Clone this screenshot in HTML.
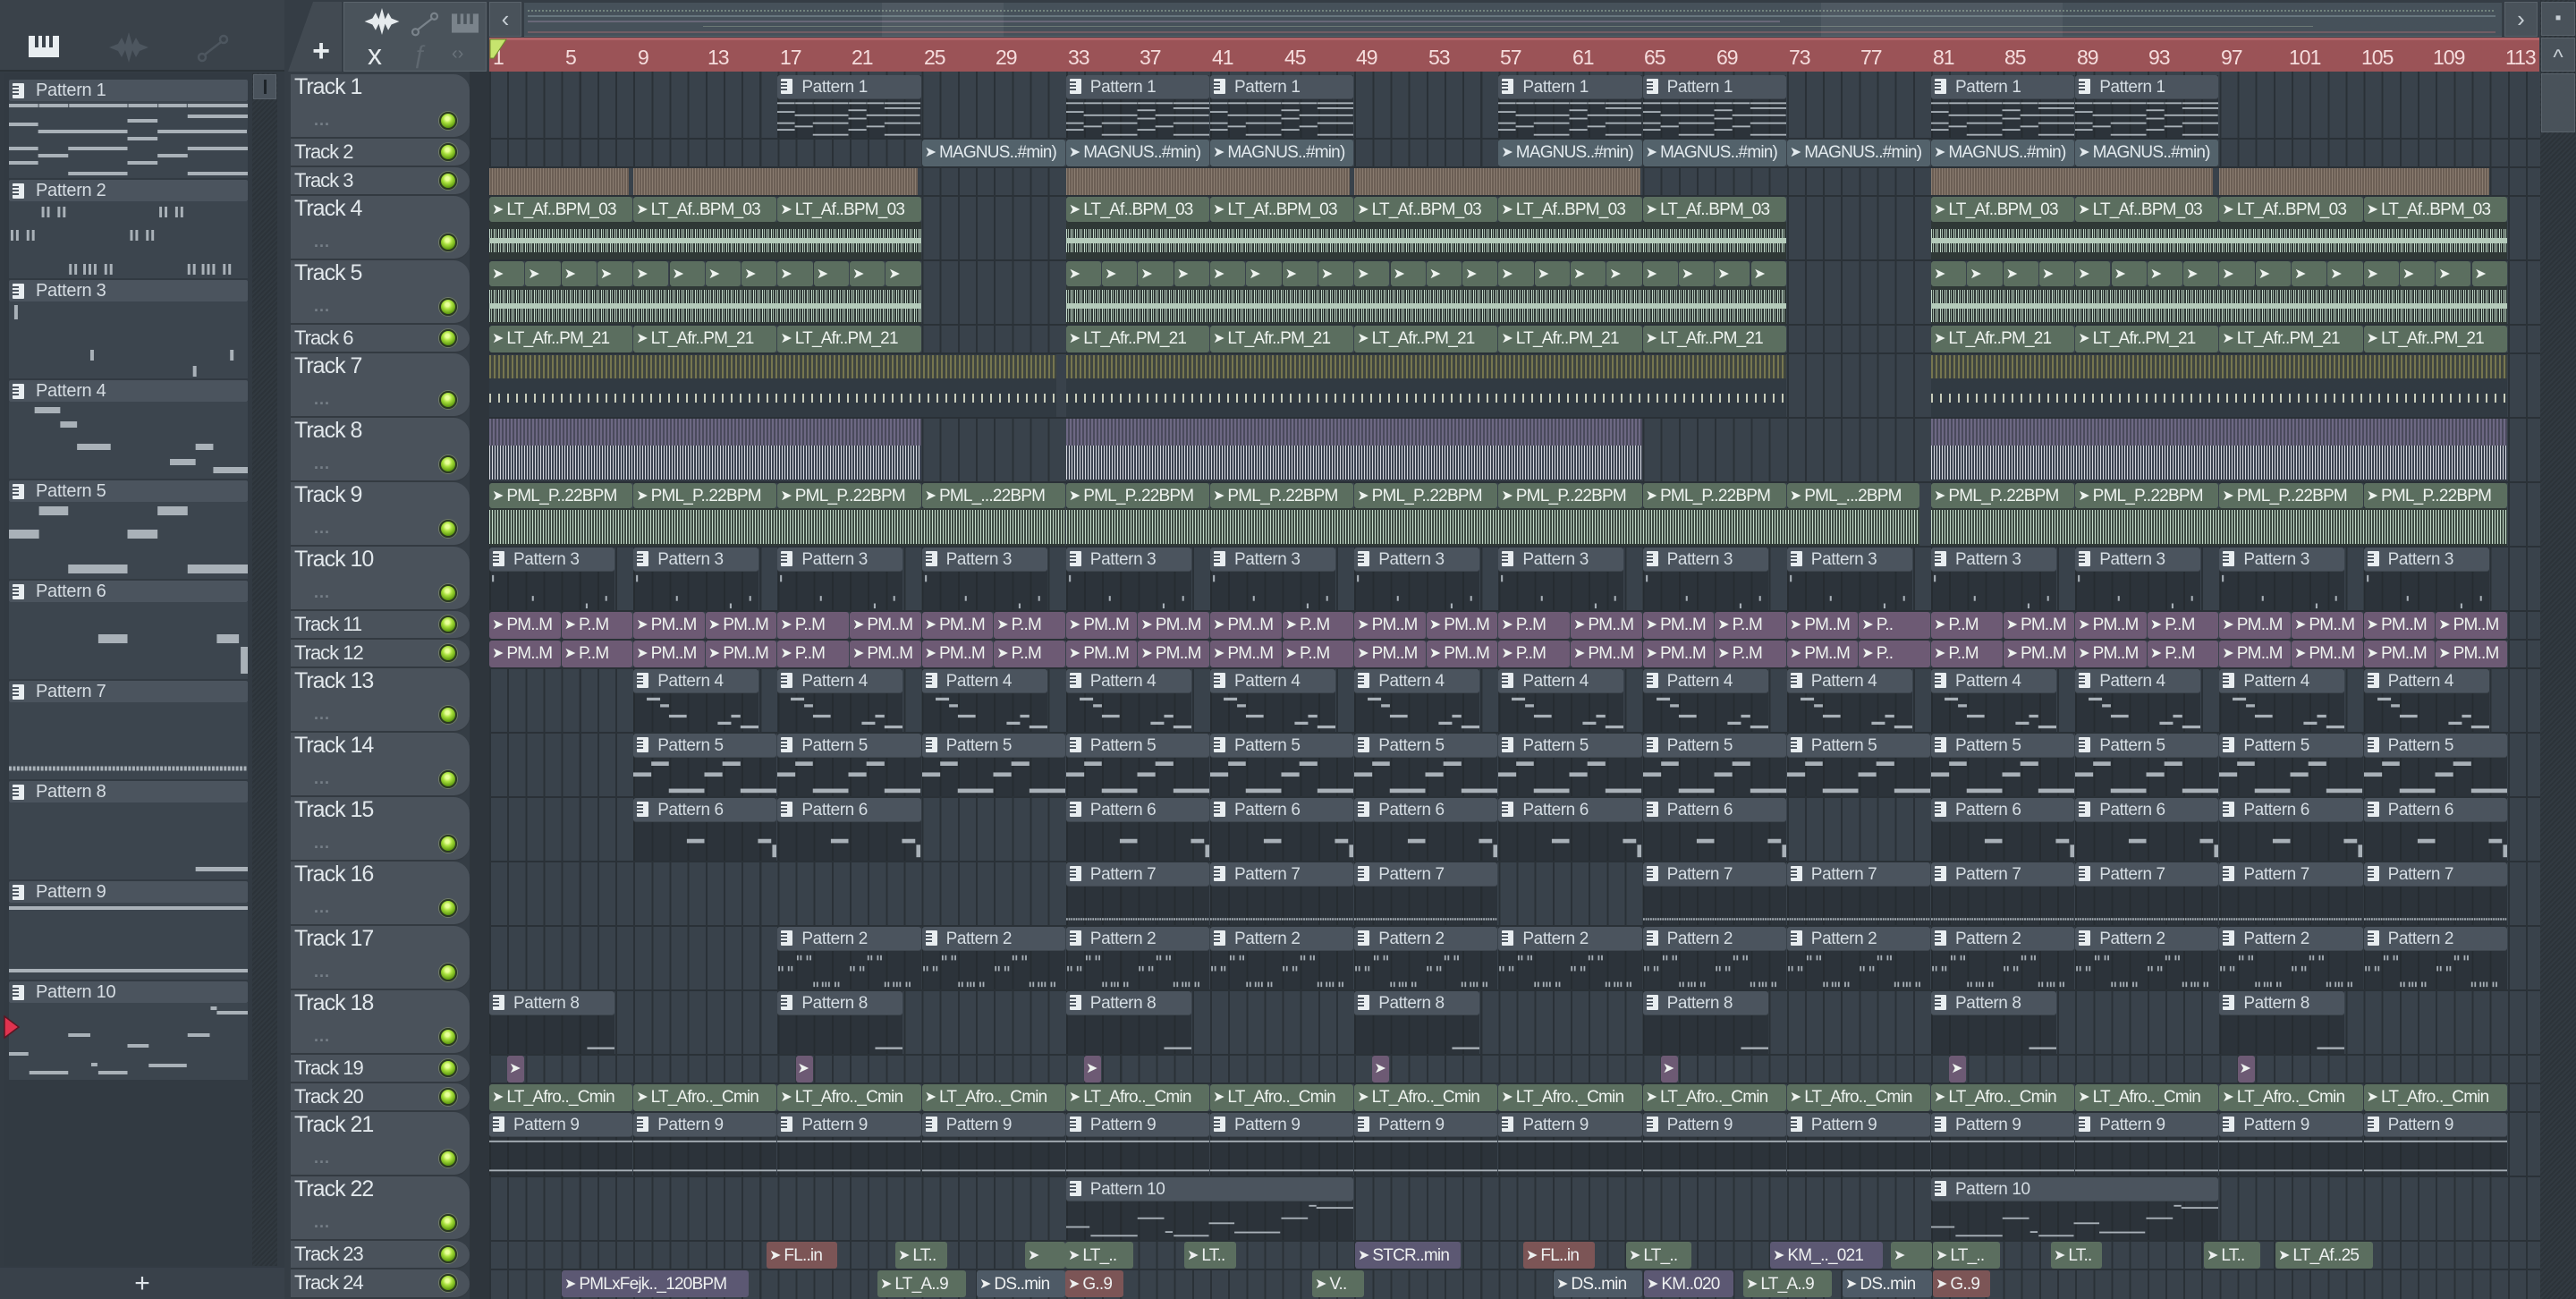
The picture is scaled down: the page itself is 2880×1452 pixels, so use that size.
<!DOCTYPE html>
<html><head><meta charset="utf-8">
<style>
*{margin:0;padding:0;box-sizing:border-box}
body{width:2880px;height:1452px;overflow:hidden;background:#353d45;font-family:"Liberation Sans Narrow","Liberation Sans",sans-serif;position:relative}
.a{position:absolute}
#lp{left:0;top:0;width:318px;height:1452px;background:#333b43}
#lpt{left:0;top:0;width:318px;height:80px;background:#3a424a;border-bottom:2px solid #2b3238}
#lpc{left:4px;top:82px;width:306px;height:1333px;background:#323a42}
.ph{position:absolute;left:10px;width:267px;height:24px;background:#4b545e;border-radius:2px;color:#d6dde3;font-size:20px;letter-spacing:-.3px;line-height:24px;padding-left:30px;white-space:nowrap}
.pv{position:absolute;left:10px;width:267px;height:86px;background:#3c454e}
.pv svg{width:100%;height:100%;display:block}
.pic{position:absolute;left:4px;top:4px;width:13px;height:17px;background:#e8edf0;border-radius:1px}
.pic:before{content:"";position:absolute;left:0;top:3px;width:7px;height:2px;background:#4b545e;box-shadow:0 4px 0 #4b545e,0 8px 0 #4b545e}
#sb{left:282px;top:82px;width:28px;height:1333px;background:repeating-linear-gradient(135deg,#2c3339 0 2px,#313940 2px 4px)}
#sbt{left:283px;top:83px;width:26px;height:28px;background:#4a535c;border:1px solid #5a636c}
#sbt:after{content:"";position:absolute;left:11px;top:5px;width:3px;height:16px;background:#1e2429}
#lpb{left:0;top:1417px;width:318px;height:35px;background:#39414a;color:#dfe5ea;font-size:30px;line-height:35px;text-align:center}
#tab{left:322px;top:2px;width:60px;height:78px;background:#424a52;clip-path:polygon(28px 0,100% 0,100% 100%,0 100%);color:#e9eef1;font-size:34px;font-weight:bold;text-align:center;line-height:110px;padding-left:14px}
#tools{left:384px;top:2px;width:160px;height:78px;background:#4a535b;border:1px solid #5a636b}
#lb{left:547px;top:2px;width:36px;height:39px;background:#49525a;border:1px solid #59626a;color:#c8d0d6;font-size:26px;text-align:center;line-height:36px}
#rb{left:2800px;top:2px;width:37px;height:39px;background:#49525a;border:1px solid #59626a;color:#c8d0d6;font-size:26px;text-align:center;line-height:36px}
#ov{left:586px;top:3px;width:2211px;height:38px;background:#46515a;border-bottom:1px solid #59636b}
#ruler{left:547px;top:42px;width:2292px;height:38px;background:#9b5357;border-top:3px solid #b26468}
.rn{position:absolute;top:6px;color:#f5dcdc;font-size:23px;letter-spacing:-1px;line-height:26px}
#vs{left:2840px;top:0;width:40px;height:1452px;background:repeating-linear-gradient(135deg,#2c3339 0 2px,#323a41 2px 4px)}
.vb{position:absolute;left:1px;width:38px;background:#49525a;border:1px solid #59626a;color:#c8d0d6;text-align:center}
#grid{left:547px;top:80px;width:2293px;height:1372px;background:#39424b;background-image:repeating-linear-gradient(90deg,#2a3137 0 2px,transparent 2px 20.15px)}
#strip{left:525px;top:80px;width:22px;height:1372px;background:#2e353c}
.th{position:absolute;left:325px;width:200px;background:#4a525b;border-radius:0 18px 18px 0;border-bottom:2px solid #333a41;color:#e1e7eb;font-size:25px;letter-spacing:-1px;padding-left:4px;white-space:nowrap}
.th .d{position:absolute;left:26px;bottom:8px;color:#767f87;font-size:18px;letter-spacing:1px;font-weight:bold}
.led{position:absolute;right:14px;width:20px;height:20px;border-radius:50%;background:radial-gradient(circle at 45% 35%,#e8ff9a 0 2px,#a8e03c 5px,#5f9a10 10px);border:2px solid #2b3a22;box-shadow:0 0 0 1px #6f7a68}
.sep{position:absolute;left:547px;width:2293px;height:2px;background:#2a3137}
.r{position:absolute;left:547px;width:2293px}
.c{position:absolute;top:1px;bottom:1px;left:calc((var(--b) - 1) * 20.15px);width:calc(var(--n,8) * 20.15px - 1px);overflow:hidden;white-space:nowrap}
.pc{background:rgba(34,40,46,.55)}
.pc .h{height:27px;background:#4b545e;border-radius:3px;color:#d5dde3;font-size:19px;letter-spacing:-.4px;line-height:27px;padding-left:27px;position:relative;border-bottom:1px solid #3f474f}
.pc svg{position:absolute;left:0;top:29px;width:100%;height:calc(100% - 30px)}
.hd{height:28px;border-radius:3px;color:#eef3ef;font-size:19px;letter-spacing:-.8px;line-height:28px;padding-left:3px;overflow:hidden;white-space:nowrap}
.g{background:#5b6e5f}
.m{background:#53626b;color:#e3eaee}
.p{background:#6d5a74}
.rd{background:#7c5556}
.pp{background:#5c5873}
.gy{background:#4e5a66}
.ar{font-family:"DejaVu Sans",sans-serif;font-size:16px;margin-right:3px;vertical-align:1px;letter-spacing:0}
.wv{position:absolute;background:repeating-linear-gradient(90deg,#c4dacb 0 1px,transparent 1px 2px,#9fb5a6 2px 3px,transparent 3px 5px)}
.sc{position:absolute;top:1px;height:30px;border-radius:3px;color:#eef0f0;font-size:19px;letter-spacing:-.8px;line-height:30px;padding-left:3px;overflow:hidden;white-space:nowrap}
</style></head><body>
<svg width="0" height="0" style="position:absolute">
<defs>
<symbol id="p1" viewBox="0 0 270 86" preserveAspectRatio="none" fill="#a9b1b8">
<rect x="0" y="3" width="33" height="4"/><rect x="34" y="3" width="33" height="4"/><rect x="68" y="3" width="66" height="4"/><rect x="135" y="3" width="33" height="4"/><rect x="169" y="3" width="32" height="4"/><rect x="202" y="3" width="68" height="4"/>
<rect x="202" y="15" width="68" height="4"/><rect x="134" y="20" width="34" height="4"/><rect x="0" y="24" width="33" height="4"/>
<rect x="33" y="32" width="101" height="4"/><rect x="168" y="32" width="101" height="4"/><rect x="134" y="40" width="34" height="4"/>
<rect x="0" y="51" width="33" height="4"/><rect x="67" y="51" width="67" height="4"/><rect x="202" y="51" width="68" height="4"/>
<rect x="33" y="59" width="34" height="4"/><rect x="168" y="59" width="34" height="4"/><rect x="0" y="67" width="33" height="4"/><rect x="134" y="67" width="34" height="4"/>
<rect x="67" y="79" width="67" height="4"/><rect x="202" y="79" width="68" height="4"/></symbol>
<symbol id="p2" viewBox="0 0 270 86" preserveAspectRatio="none" fill="#a9b1b8">
<rect x="37" y="6" width="3" height="12"/><rect x="43" y="6" width="3" height="12"/><rect x="55" y="6" width="3" height="12"/><rect x="61" y="6" width="3" height="12"/>
<rect x="170" y="6" width="3" height="12"/><rect x="176" y="6" width="3" height="12"/><rect x="188" y="6" width="3" height="12"/><rect x="194" y="6" width="3" height="12"/>
<rect x="2" y="32" width="3" height="12"/><rect x="8" y="32" width="3" height="12"/><rect x="20" y="32" width="3" height="12"/><rect x="26" y="32" width="3" height="12"/>
<rect x="137" y="32" width="3" height="12"/><rect x="143" y="32" width="3" height="12"/><rect x="155" y="32" width="3" height="12"/><rect x="161" y="32" width="3" height="12"/>
<rect x="68" y="70" width="3" height="12"/><rect x="74" y="70" width="3" height="12"/><rect x="84" y="70" width="3" height="12"/><rect x="90" y="70" width="3" height="12"/><rect x="96" y="70" width="3" height="12"/><rect x="108" y="70" width="3" height="12"/><rect x="114" y="70" width="3" height="12"/>
<rect x="202" y="70" width="3" height="12"/><rect x="208" y="70" width="3" height="12"/><rect x="218" y="70" width="3" height="12"/><rect x="224" y="70" width="3" height="12"/><rect x="230" y="70" width="3" height="12"/><rect x="242" y="70" width="3" height="12"/><rect x="248" y="70" width="3" height="12"/></symbol>
<symbol id="p3" viewBox="0 0 270 86" preserveAspectRatio="none" fill="#a9b1b8">
<rect x="6" y="4" width="4" height="16"/><rect x="92" y="54" width="4" height="12"/><rect x="208" y="72" width="4" height="12"/><rect x="250" y="54" width="4" height="12"/></symbol>
<symbol id="p4" viewBox="0 0 270 86" preserveAspectRatio="none" fill="#a9b1b8">
<rect x="29" y="6" width="29" height="7"/><rect x="58" y="22" width="19" height="7"/><rect x="77" y="47" width="38" height="7"/><rect x="211" y="47" width="20" height="7"/><rect x="182" y="64" width="29" height="7"/><rect x="231" y="73" width="39" height="7"/></symbol>
<symbol id="p5" viewBox="0 0 270 86" preserveAspectRatio="none" fill="#a9b1b8">
<rect x="34" y="5" width="33" height="10"/><rect x="168" y="5" width="34" height="10"/><rect x="0" y="31" width="34" height="10"/><rect x="134" y="31" width="34" height="10"/><rect x="67" y="70" width="67" height="10"/><rect x="202" y="70" width="68" height="10"/></symbol>
<symbol id="p6" viewBox="0 0 270 86" preserveAspectRatio="none" fill="#a9b1b8">
<rect x="101" y="36" width="33" height="10"/><rect x="235" y="36" width="25" height="10"/><rect x="262" y="50" width="8" height="30"/></symbol>
<symbol id="p7" viewBox="0 0 270 86" preserveAspectRatio="none"><line x1="0" y1="74" x2="270" y2="74" stroke="#a9b1b8" stroke-width="5" stroke-dasharray="3 1.5"/></symbol>
<symbol id="p8" viewBox="0 0 270 86" preserveAspectRatio="none" fill="#a9b1b8"><rect x="211" y="72" width="59" height="5"/></symbol>
<symbol id="p9" viewBox="0 0 270 86" preserveAspectRatio="none" fill="#a9b1b8"><rect x="0" y="4" width="270" height="4"/><rect x="0" y="74" width="270" height="4"/></symbol>
<symbol id="p10" viewBox="0 0 270 86" preserveAspectRatio="none" fill="#a9b1b8">
<rect x="228" y="4" width="7" height="4"/><rect x="235" y="9" width="35" height="4"/><rect x="67" y="34" width="25" height="4"/><rect x="202" y="34" width="25" height="4"/><rect x="134" y="46" width="24" height="4"/><rect x="0" y="55" width="22" height="4"/><rect x="93" y="67" width="7" height="4"/><rect x="158" y="68" width="43" height="4"/><rect x="23" y="76" width="44" height="4"/><rect x="101" y="76" width="33" height="4"/></symbol>
</defs></svg>

<div id="lp" class="a"></div>
<div id="lpt" class="a">
 <svg class="a" style="left:32px;top:40px" width="34" height="24" viewBox="0 0 34 24"><rect x="0" y="0" width="34" height="24" fill="#e8edf0"/><rect x="7" y="0" width="4" height="13" fill="#3a424a"/><rect x="15" y="0" width="4" height="13" fill="#3a424a"/><rect x="23" y="0" width="4" height="13" fill="#3a424a"/></svg>
 <svg class="a" style="left:122px;top:36px" width="44" height="34" viewBox="0 0 44 34"><path d="M0 17 L10 13 L14 6 L18 14 L22 0 L26 14 L30 6 L34 13 L44 17 L34 21 L30 28 L26 20 L22 34 L18 20 L14 28 L10 21Z" fill="#4d565f"/></svg>
 <svg class="a" style="left:220px;top:38px" width="36" height="32" viewBox="0 0 36 32"><circle cx="6" cy="26" r="4" fill="none" stroke="#4d565f" stroke-width="2.5"/><circle cx="30" cy="6" r="4" fill="none" stroke="#4d565f" stroke-width="2.5"/><line x1="9" y1="23" x2="27" y2="9" stroke="#4d565f" stroke-width="2.5"/></svg>
</div>
<div id="lpc" class="a"></div>
<div class="ph" style="top:89px"><span class="pic"></span>Pattern 1</div><div class="pv" style="top:113px"><svg><use href="#p1"/></svg></div>
<div class="ph" style="top:201px"><span class="pic"></span>Pattern 2</div><div class="pv" style="top:225px"><svg><use href="#p2"/></svg></div>
<div class="ph" style="top:313px"><span class="pic"></span>Pattern 3</div><div class="pv" style="top:337px"><svg><use href="#p3"/></svg></div>
<div class="ph" style="top:425px"><span class="pic"></span>Pattern 4</div><div class="pv" style="top:449px"><svg><use href="#p4"/></svg></div>
<div class="ph" style="top:537px"><span class="pic"></span>Pattern 5</div><div class="pv" style="top:561px"><svg><use href="#p5"/></svg></div>
<div class="ph" style="top:649px"><span class="pic"></span>Pattern 6</div><div class="pv" style="top:673px"><svg><use href="#p6"/></svg></div>
<div class="ph" style="top:761px"><span class="pic"></span>Pattern 7</div><div class="pv" style="top:785px"><svg><use href="#p7"/></svg></div>
<div class="ph" style="top:873px"><span class="pic"></span>Pattern 8</div><div class="pv" style="top:897px"><svg><use href="#p8"/></svg></div>
<div class="ph" style="top:985px"><span class="pic"></span>Pattern 9</div><div class="pv" style="top:1009px"><svg><use href="#p9"/></svg></div>
<div class="ph" style="top:1097px"><span class="pic"></span>Pattern 10</div><div class="pv" style="top:1121px"><svg><use href="#p10"/></svg></div>
<svg class="a" style="left:4px;top:1135px" width="18" height="26" viewBox="0 0 18 26"><path d="M1 1 L17 13 L1 25Z" fill="#e0334f" stroke="#5a1522" stroke-width="1.5"/></svg>
<div id="sb" class="a"></div><div id="sbt" class="a"></div>
<div id="lpb" class="a">+</div>

<div id="tab" class="a">+</div>
<div id="tools" class="a">
 <svg class="a" style="left:22px;top:6px" width="40" height="30" viewBox="0 0 44 34"><path d="M0 17 L10 13 L14 6 L18 14 L22 0 L26 14 L30 6 L34 13 L44 17 L34 21 L30 28 L26 20 L22 34 L18 20 L14 28 L10 21Z" fill="#e6ebee"/></svg>
 <svg class="a" style="left:74px;top:10px" width="32" height="28" viewBox="0 0 36 32"><circle cx="6" cy="26" r="4" fill="none" stroke="#7a838b" stroke-width="2.5"/><circle cx="30" cy="6" r="4" fill="none" stroke="#7a838b" stroke-width="2.5"/><line x1="9" y1="23" x2="27" y2="9" stroke="#7a838b" stroke-width="2.5"/></svg>
 <svg class="a" style="left:120px;top:11px" width="30" height="24" viewBox="0 0 34 24"><rect width="34" height="24" fill="#7a838b"/><rect x="7" y="0" width="4" height="13" fill="#4a535b"/><rect x="15" y="0" width="4" height="13" fill="#4a535b"/><rect x="23" y="0" width="4" height="13" fill="#4a535b"/></svg>
 <div class="a" style="left:26px;top:40px;color:#e6ebee;font-size:32px">x</div>
 <div class="a" style="left:76px;top:42px;color:#5f6870;font-size:28px;font-style:italic">ƒ</div>
 <div class="a" style="left:120px;top:46px;color:#6a737b;font-size:20px">‹›</div>
</div>
<div id="lb" class="a">‹</div>
<div id="ov" class="a">
 <div class="a" style="left:4px;top:8px;width:2200px;height:2px;background:repeating-linear-gradient(90deg,#8fa496 0 2px,transparent 2px 4px);opacity:.6"></div>
 <div class="a" style="left:4px;top:14px;width:2200px;height:2px;background:#7c8d95;opacity:.6"></div>
 <div class="a" style="left:4px;top:20px;width:1400px;height:2px;background:#8a7d95;opacity:.5"></div>
 <div class="a" style="left:200px;top:26px;width:1800px;height:1px;background:#8fa090;opacity:.5"></div>
 <div class="a" style="left:4px;top:32px;width:2200px;height:2px;background:#9a6a6e;opacity:.5"></div>
 <div class="a" style="left:400px;top:0;width:136px;height:38px;background:rgba(255,255,255,.05)"></div>
 <div class="a" style="left:1450px;top:0;width:270px;height:38px;background:rgba(255,255,255,.05)"></div>
</div>
<div id="rb" class="a">›</div>
<div id="ruler" class="a">
 <div class="rn" style="left:4px">1</div><div class="rn" style="left:85px">5</div><div class="rn" style="left:166px">9</div><div class="rn" style="left:244px">13</div><div class="rn" style="left:325px">17</div><div class="rn" style="left:405px">21</div><div class="rn" style="left:486px">25</div><div class="rn" style="left:566px">29</div><div class="rn" style="left:647px">33</div><div class="rn" style="left:727px">37</div><div class="rn" style="left:808px">41</div><div class="rn" style="left:889px">45</div><div class="rn" style="left:969px">49</div><div class="rn" style="left:1050px">53</div><div class="rn" style="left:1130px">57</div><div class="rn" style="left:1211px">61</div><div class="rn" style="left:1291px">65</div><div class="rn" style="left:1372px">69</div><div class="rn" style="left:1453px">73</div><div class="rn" style="left:1533px">77</div><div class="rn" style="left:1614px">81</div><div class="rn" style="left:1694px">85</div><div class="rn" style="left:1775px">89</div><div class="rn" style="left:1855px">93</div><div class="rn" style="left:1936px">97</div><div class="rn" style="left:2012px">101</div><div class="rn" style="left:2093px">105</div><div class="rn" style="left:2173px">109</div><div class="rn" style="left:2254px">113</div>
 <svg class="a" style="left:0;top:-2px" width="20" height="24" viewBox="0 0 20 24"><path d="M1 1 L19 1 L5 22 L1 22Z" fill="#c6e46e" stroke="#6c8a2a" stroke-width="1"/></svg>
</div>
<div id="vs" class="a">
 <div class="vb" style="top:2px;height:38px;font-size:20px;line-height:34px">▪</div>
 <div class="vb" style="top:42px;height:38px;font-size:24px;line-height:44px">^</div>
 <div class="vb" style="top:82px;height:66px"></div>
</div>

<div id="strip" class="a"></div>
<div id="grid" class="a"></div>

<div class="th" style="top:83px;height:72px">Track 1<span class="d">...</span><span class="led" style="top:42px"></span></div>
<div class="th" style="top:155px;height:32px;font-size:22px;line-height:30px">Track 2<span class="led" style="top:5px"></span></div>
<div class="th" style="top:187px;height:32px;font-size:22px;line-height:30px">Track 3<span class="led" style="top:5px"></span></div>
<div class="th" style="top:219px;height:72px">Track 4<span class="d">...</span><span class="led" style="top:42px"></span></div>
<div class="th" style="top:291px;height:72px">Track 5<span class="d">...</span><span class="led" style="top:42px"></span></div>
<div class="th" style="top:363px;height:32px;font-size:22px;line-height:30px">Track 6<span class="led" style="top:5px"></span></div>
<div class="th" style="top:395px;height:72px">Track 7<span class="d">...</span><span class="led" style="top:42px"></span></div>
<div class="th" style="top:467px;height:72px">Track 8<span class="d">...</span><span class="led" style="top:42px"></span></div>
<div class="th" style="top:539px;height:72px">Track 9<span class="d">...</span><span class="led" style="top:42px"></span></div>
<div class="th" style="top:611px;height:72px">Track 10<span class="d">...</span><span class="led" style="top:42px"></span></div>
<div class="th" style="top:683px;height:32px;font-size:22px;line-height:30px">Track 11<span class="led" style="top:5px"></span></div>
<div class="th" style="top:715px;height:32px;font-size:22px;line-height:30px">Track 12<span class="led" style="top:5px"></span></div>
<div class="th" style="top:747px;height:72px">Track 13<span class="d">...</span><span class="led" style="top:42px"></span></div>
<div class="th" style="top:819px;height:72px">Track 14<span class="d">...</span><span class="led" style="top:42px"></span></div>
<div class="th" style="top:891px;height:72px">Track 15<span class="d">...</span><span class="led" style="top:42px"></span></div>
<div class="th" style="top:963px;height:72px">Track 16<span class="d">...</span><span class="led" style="top:42px"></span></div>
<div class="th" style="top:1035px;height:72px">Track 17<span class="d">...</span><span class="led" style="top:42px"></span></div>
<div class="th" style="top:1107px;height:72px">Track 18<span class="d">...</span><span class="led" style="top:42px"></span></div>
<div class="th" style="top:1179px;height:32px;font-size:22px;line-height:30px">Track 19<span class="led" style="top:5px"></span></div>
<div class="th" style="top:1211px;height:32px;font-size:22px;line-height:30px">Track 20<span class="led" style="top:5px"></span></div>
<div class="th" style="top:1243px;height:72px">Track 21<span class="d">...</span><span class="led" style="top:42px"></span></div>
<div class="th" style="top:1315px;height:72px">Track 22<span class="d">...</span><span class="led" style="top:42px"></span></div>
<div class="th" style="top:1387px;height:32px;font-size:22px;line-height:30px">Track 23<span class="led" style="top:5px"></span></div>
<div class="th" style="top:1419px;height:33px;font-size:22px;line-height:30px">Track 24<span class="led" style="top:5px"></span></div>

<div class="sep" style="top:154px"></div><div class="sep" style="top:186px"></div><div class="sep" style="top:218px"></div><div class="sep" style="top:290px"></div><div class="sep" style="top:362px"></div><div class="sep" style="top:394px"></div><div class="sep" style="top:466px"></div><div class="sep" style="top:538px"></div><div class="sep" style="top:610px"></div><div class="sep" style="top:682px"></div><div class="sep" style="top:714px"></div><div class="sep" style="top:746px"></div><div class="sep" style="top:818px"></div><div class="sep" style="top:890px"></div><div class="sep" style="top:962px"></div><div class="sep" style="top:1034px"></div><div class="sep" style="top:1106px"></div><div class="sep" style="top:1178px"></div><div class="sep" style="top:1210px"></div><div class="sep" style="top:1242px"></div><div class="sep" style="top:1314px"></div><div class="sep" style="top:1386px"></div><div class="sep" style="top:1418px"></div>

<div class="r" style="top:83px;height:72px">
<div class="c pc" style="--b:17"><div class="h"><span class="pic"></span>Pattern 1</div><svg><use href="#p1"/></svg></div>
<div class="c pc" style="--b:33"><div class="h"><span class="pic"></span>Pattern 1</div><svg><use href="#p1"/></svg></div>
<div class="c pc" style="--b:41"><div class="h"><span class="pic"></span>Pattern 1</div><svg><use href="#p1"/></svg></div>
<div class="c pc" style="--b:57"><div class="h"><span class="pic"></span>Pattern 1</div><svg><use href="#p1"/></svg></div>
<div class="c pc" style="--b:65"><div class="h"><span class="pic"></span>Pattern 1</div><svg><use href="#p1"/></svg></div>
<div class="c pc" style="--b:81"><div class="h"><span class="pic"></span>Pattern 1</div><svg><use href="#p1"/></svg></div>
<div class="c pc" style="--b:89"><div class="h"><span class="pic"></span>Pattern 1</div><svg><use href="#p1"/></svg></div>
</div>
<div class="r" style="top:155px;height:32px">
<div class="c hd m" style="--b:25;height:30px"><span class="ar">➤</span>MAGNUS..#min)</div>
<div class="c hd m" style="--b:33;height:30px"><span class="ar">➤</span>MAGNUS..#min)</div>
<div class="c hd m" style="--b:41;height:30px"><span class="ar">➤</span>MAGNUS..#min)</div>
<div class="c hd m" style="--b:57;height:30px"><span class="ar">➤</span>MAGNUS..#min)</div>
<div class="c hd m" style="--b:65;height:30px"><span class="ar">➤</span>MAGNUS..#min)</div>
<div class="c hd m" style="--b:73;height:30px"><span class="ar">➤</span>MAGNUS..#min)</div>
<div class="c hd m" style="--b:81;height:30px"><span class="ar">➤</span>MAGNUS..#min)</div>
<div class="c hd m" style="--b:89;height:30px"><span class="ar">➤</span>MAGNUS..#min)</div>
</div>
<div class="r" style="top:187px;height:32px">
<div class="c" style="--b:1;--n:7.8;background:#6c5f55 repeating-linear-gradient(90deg,#8a7c70 0 1px,transparent 1px 3px)"></div>
<div class="c" style="--b:9;--n:15.8;background:#6c5f55 repeating-linear-gradient(90deg,#8a7c70 0 1px,transparent 1px 3px)"></div>
<div class="c" style="--b:33;--n:15.8;background:#6c5f55 repeating-linear-gradient(90deg,#8a7c70 0 1px,transparent 1px 3px)"></div>
<div class="c" style="--b:49;--n:15.9;background:#6c5f55 repeating-linear-gradient(90deg,#8a7c70 0 1px,transparent 1px 3px)"></div>
<div class="c" style="--b:81;--n:15.7;background:#6c5f55 repeating-linear-gradient(90deg,#8a7c70 0 1px,transparent 1px 3px)"></div>
<div class="c" style="--b:97;--n:15;background:#6c5f55 repeating-linear-gradient(90deg,#8a7c70 0 1px,transparent 1px 3px)"></div>
</div>
<div class="r" style="top:219px;height:72px">
<div class="c" style="--b:1;--n:24;top:29px;background:#2f3836"><div class="wv" style="left:0;right:0;top:8px;height:26px"></div><div class="a" style="left:0;right:0;top:18px;height:6px;background:#b5cbbb"></div></div>
<div class="c" style="--b:33;--n:40;top:29px;background:#2f3836"><div class="wv" style="left:0;right:0;top:8px;height:26px"></div><div class="a" style="left:0;right:0;top:18px;height:6px;background:#b5cbbb"></div></div>
<div class="c" style="--b:81;--n:32;top:29px;background:#2f3836"><div class="wv" style="left:0;right:0;top:8px;height:26px"></div><div class="a" style="left:0;right:0;top:18px;height:6px;background:#b5cbbb"></div></div>
<div class="c hd g" style="--b:1;height:28px"><span class="ar">➤</span>LT_Af..BPM_03</div>
<div class="c hd g" style="--b:9;height:28px"><span class="ar">➤</span>LT_Af..BPM_03</div>
<div class="c hd g" style="--b:17;height:28px"><span class="ar">➤</span>LT_Af..BPM_03</div>
<div class="c hd g" style="--b:33;height:28px"><span class="ar">➤</span>LT_Af..BPM_03</div>
<div class="c hd g" style="--b:41;height:28px"><span class="ar">➤</span>LT_Af..BPM_03</div>
<div class="c hd g" style="--b:49;height:28px"><span class="ar">➤</span>LT_Af..BPM_03</div>
<div class="c hd g" style="--b:57;height:28px"><span class="ar">➤</span>LT_Af..BPM_03</div>
<div class="c hd g" style="--b:65;height:28px"><span class="ar">➤</span>LT_Af..BPM_03</div>
<div class="c hd g" style="--b:81;height:28px"><span class="ar">➤</span>LT_Af..BPM_03</div>
<div class="c hd g" style="--b:89;height:28px"><span class="ar">➤</span>LT_Af..BPM_03</div>
<div class="c hd g" style="--b:97;height:28px"><span class="ar">➤</span>LT_Af..BPM_03</div>
<div class="c hd g" style="--b:105;height:28px"><span class="ar">➤</span>LT_Af..BPM_03</div>
</div>
<div class="r" style="top:291px;height:72px">
<div class="c" style="--b:1;--n:24;top:29px;background:#2f3836"><div class="wv" style="left:0;right:0;top:4px;height:36px"></div><div class="a" style="left:0;right:0;top:19px;height:6px;background:#b5cbbb"></div></div>
<div class="c" style="--b:33;--n:40;top:29px;background:#2f3836"><div class="wv" style="left:0;right:0;top:4px;height:36px"></div><div class="a" style="left:0;right:0;top:19px;height:6px;background:#b5cbbb"></div></div>
<div class="c" style="--b:81;--n:32;top:29px;background:#2f3836"><div class="wv" style="left:0;right:0;top:4px;height:36px"></div><div class="a" style="left:0;right:0;top:19px;height:6px;background:#b5cbbb"></div></div>
<div class="c hd g" style="--b:1;--n:2;height:28px"><span class="ar">➤</span></div><div class="c hd g" style="--b:3;--n:2;height:28px"><span class="ar">➤</span></div><div class="c hd g" style="--b:5;--n:2;height:28px"><span class="ar">➤</span></div><div class="c hd g" style="--b:7;--n:2;height:28px"><span class="ar">➤</span></div><div class="c hd g" style="--b:9;--n:2;height:28px"><span class="ar">➤</span></div><div class="c hd g" style="--b:11;--n:2;height:28px"><span class="ar">➤</span></div><div class="c hd g" style="--b:13;--n:2;height:28px"><span class="ar">➤</span></div><div class="c hd g" style="--b:15;--n:2;height:28px"><span class="ar">➤</span></div><div class="c hd g" style="--b:17;--n:2;height:28px"><span class="ar">➤</span></div><div class="c hd g" style="--b:19;--n:2;height:28px"><span class="ar">➤</span></div><div class="c hd g" style="--b:21;--n:2;height:28px"><span class="ar">➤</span></div><div class="c hd g" style="--b:23;--n:2;height:28px"><span class="ar">➤</span></div>
<div class="c hd g" style="--b:33;--n:2;height:28px"><span class="ar">➤</span></div><div class="c hd g" style="--b:35;--n:2;height:28px"><span class="ar">➤</span></div><div class="c hd g" style="--b:37;--n:2;height:28px"><span class="ar">➤</span></div><div class="c hd g" style="--b:39;--n:2;height:28px"><span class="ar">➤</span></div><div class="c hd g" style="--b:41;--n:2;height:28px"><span class="ar">➤</span></div><div class="c hd g" style="--b:43;--n:2;height:28px"><span class="ar">➤</span></div><div class="c hd g" style="--b:45;--n:2;height:28px"><span class="ar">➤</span></div><div class="c hd g" style="--b:47;--n:2;height:28px"><span class="ar">➤</span></div><div class="c hd g" style="--b:49;--n:2;height:28px"><span class="ar">➤</span></div><div class="c hd g" style="--b:51;--n:2;height:28px"><span class="ar">➤</span></div><div class="c hd g" style="--b:53;--n:2;height:28px"><span class="ar">➤</span></div><div class="c hd g" style="--b:55;--n:2;height:28px"><span class="ar">➤</span></div><div class="c hd g" style="--b:57;--n:2;height:28px"><span class="ar">➤</span></div><div class="c hd g" style="--b:59;--n:2;height:28px"><span class="ar">➤</span></div><div class="c hd g" style="--b:61;--n:2;height:28px"><span class="ar">➤</span></div><div class="c hd g" style="--b:63;--n:2;height:28px"><span class="ar">➤</span></div><div class="c hd g" style="--b:65;--n:2;height:28px"><span class="ar">➤</span></div><div class="c hd g" style="--b:67;--n:2;height:28px"><span class="ar">➤</span></div><div class="c hd g" style="--b:69;--n:2;height:28px"><span class="ar">➤</span></div><div class="c hd g" style="--b:71;--n:2;height:28px"><span class="ar">➤</span></div>
<div class="c hd g" style="--b:81;--n:2;height:28px"><span class="ar">➤</span></div><div class="c hd g" style="--b:83;--n:2;height:28px"><span class="ar">➤</span></div><div class="c hd g" style="--b:85;--n:2;height:28px"><span class="ar">➤</span></div><div class="c hd g" style="--b:87;--n:2;height:28px"><span class="ar">➤</span></div><div class="c hd g" style="--b:89;--n:2;height:28px"><span class="ar">➤</span></div><div class="c hd g" style="--b:91;--n:2;height:28px"><span class="ar">➤</span></div><div class="c hd g" style="--b:93;--n:2;height:28px"><span class="ar">➤</span></div><div class="c hd g" style="--b:95;--n:2;height:28px"><span class="ar">➤</span></div><div class="c hd g" style="--b:97;--n:2;height:28px"><span class="ar">➤</span></div><div class="c hd g" style="--b:99;--n:2;height:28px"><span class="ar">➤</span></div><div class="c hd g" style="--b:101;--n:2;height:28px"><span class="ar">➤</span></div><div class="c hd g" style="--b:103;--n:2;height:28px"><span class="ar">➤</span></div><div class="c hd g" style="--b:105;--n:2;height:28px"><span class="ar">➤</span></div><div class="c hd g" style="--b:107;--n:2;height:28px"><span class="ar">➤</span></div><div class="c hd g" style="--b:109;--n:2;height:28px"><span class="ar">➤</span></div><div class="c hd g" style="--b:111;--n:2;height:28px"><span class="ar">➤</span></div>
</div>
<div class="r" style="top:363px;height:32px">
<div class="c hd g" style="--b:1;height:30px"><span class="ar">➤</span>LT_Afr..PM_21</div>
<div class="c hd g" style="--b:9;height:30px"><span class="ar">➤</span>LT_Afr..PM_21</div>
<div class="c hd g" style="--b:17;height:30px"><span class="ar">➤</span>LT_Afr..PM_21</div>
<div class="c hd g" style="--b:33;height:30px"><span class="ar">➤</span>LT_Afr..PM_21</div>
<div class="c hd g" style="--b:41;height:30px"><span class="ar">➤</span>LT_Afr..PM_21</div>
<div class="c hd g" style="--b:49;height:30px"><span class="ar">➤</span>LT_Afr..PM_21</div>
<div class="c hd g" style="--b:57;height:30px"><span class="ar">➤</span>LT_Afr..PM_21</div>
<div class="c hd g" style="--b:65;height:30px"><span class="ar">➤</span>LT_Afr..PM_21</div>
<div class="c hd g" style="--b:81;height:30px"><span class="ar">➤</span>LT_Afr..PM_21</div>
<div class="c hd g" style="--b:89;height:30px"><span class="ar">➤</span>LT_Afr..PM_21</div>
<div class="c hd g" style="--b:97;height:30px"><span class="ar">➤</span>LT_Afr..PM_21</div>
<div class="c hd g" style="--b:105;height:30px"><span class="ar">➤</span>LT_Afr..PM_21</div>
</div>
<div class="r" style="top:395px;height:72px">
<div class="c" style="--b:1;--n:31.5;background:#313a42"><div class="a" style="left:0;right:0;top:1px;height:26px;background:repeating-linear-gradient(90deg,#76764f 0 2px,#3f4540 2px 5px)"></div><div class="a" style="left:0;right:0;top:44px;height:10px;background:repeating-linear-gradient(90deg,#c8ccba 0 2px,transparent 2px 10px)"></div></div>
<div class="c" style="--b:33;--n:40;background:#313a42"><div class="a" style="left:0;right:0;top:1px;height:26px;background:repeating-linear-gradient(90deg,#76764f 0 2px,#3f4540 2px 5px)"></div><div class="a" style="left:0;right:0;top:44px;height:10px;background:repeating-linear-gradient(90deg,#c8ccba 0 2px,transparent 2px 10px)"></div></div>
<div class="c" style="--b:81;--n:32;background:#313a42"><div class="a" style="left:0;right:0;top:1px;height:26px;background:repeating-linear-gradient(90deg,#76764f 0 2px,#3f4540 2px 5px)"></div><div class="a" style="left:0;right:0;top:44px;height:10px;background:repeating-linear-gradient(90deg,#c8ccba 0 2px,transparent 2px 10px)"></div></div>
</div>
<div class="r" style="top:467px;height:72px">
<div class="c" style="--b:1;--n:24;background:#343b45"><div class="a" style="left:0;right:0;top:0;height:30px;background:repeating-linear-gradient(90deg,#6d6883 0 2px,#4a4a5c 2px 4px)"></div><div class="a" style="left:0;right:0;top:30px;height:38px;background:repeating-linear-gradient(90deg,#d8dbe2 0 1px,#3b4250 1px 3px)"></div></div>
<div class="c" style="--b:33;--n:32;background:#343b45"><div class="a" style="left:0;right:0;top:0;height:30px;background:repeating-linear-gradient(90deg,#6d6883 0 2px,#4a4a5c 2px 4px)"></div><div class="a" style="left:0;right:0;top:30px;height:38px;background:repeating-linear-gradient(90deg,#d8dbe2 0 1px,#3b4250 1px 3px)"></div></div>
<div class="c" style="--b:81;--n:32;background:#343b45"><div class="a" style="left:0;right:0;top:0;height:30px;background:repeating-linear-gradient(90deg,#6d6883 0 2px,#4a4a5c 2px 4px)"></div><div class="a" style="left:0;right:0;top:30px;height:38px;background:repeating-linear-gradient(90deg,#d8dbe2 0 1px,#3b4250 1px 3px)"></div></div>
</div>
<div class="r" style="top:539px;height:72px">
<div class="c" style="--b:1;--n:32;top:29px;background:#2f3836"><div class="wv" style="left:0;right:0;top:2px;height:38px;background:repeating-linear-gradient(90deg,#c6dccb 0 1px,#3c4a42 1px 3px)"></div></div>
<div class="c" style="--b:33;--n:47.4;top:29px;background:#2f3836"><div class="wv" style="left:0;right:0;top:2px;height:38px;background:repeating-linear-gradient(90deg,#c6dccb 0 1px,#3c4a42 1px 3px)"></div></div>
<div class="c" style="--b:81;--n:32;top:29px;background:#2f3836"><div class="wv" style="left:0;right:0;top:2px;height:38px;background:repeating-linear-gradient(90deg,#c6dccb 0 1px,#3c4a42 1px 3px)"></div></div>
<div class="c hd g" style="--b:1;height:28px"><span class="ar">➤</span>PML_P..22BPM</div>
<div class="c hd g" style="--b:9;height:28px"><span class="ar">➤</span>PML_P..22BPM</div>
<div class="c hd g" style="--b:17;height:28px"><span class="ar">➤</span>PML_P..22BPM</div>
<div class="c hd g" style="--b:25;height:28px"><span class="ar">➤</span>PML_...22BPM</div>
<div class="c hd g" style="--b:33;height:28px"><span class="ar">➤</span>PML_P..22BPM</div>
<div class="c hd g" style="--b:41;height:28px"><span class="ar">➤</span>PML_P..22BPM</div>
<div class="c hd g" style="--b:49;height:28px"><span class="ar">➤</span>PML_P..22BPM</div>
<div class="c hd g" style="--b:57;height:28px"><span class="ar">➤</span>PML_P..22BPM</div>
<div class="c hd g" style="--b:65;height:28px"><span class="ar">➤</span>PML_P..22BPM</div>
<div class="c hd g" style="--b:73;--n:7.4;height:28px"><span class="ar">➤</span>PML_...2BPM</div>
<div class="c hd g" style="--b:81;height:28px"><span class="ar">➤</span>PML_P..22BPM</div>
<div class="c hd g" style="--b:89;height:28px"><span class="ar">➤</span>PML_P..22BPM</div>
<div class="c hd g" style="--b:97;height:28px"><span class="ar">➤</span>PML_P..22BPM</div>
<div class="c hd g" style="--b:105;height:28px"><span class="ar">➤</span>PML_P..22BPM</div>
</div>
<div class="r" style="top:611px;height:72px">
<div class="c pc" style="--b:1;--n:7"><div class="h"><span class="pic"></span>Pattern 3</div><svg><use href="#p3"/></svg></div>
<div class="c pc" style="--b:9;--n:7"><div class="h"><span class="pic"></span>Pattern 3</div><svg><use href="#p3"/></svg></div>
<div class="c pc" style="--b:17;--n:7"><div class="h"><span class="pic"></span>Pattern 3</div><svg><use href="#p3"/></svg></div>
<div class="c pc" style="--b:25;--n:7"><div class="h"><span class="pic"></span>Pattern 3</div><svg><use href="#p3"/></svg></div>
<div class="c pc" style="--b:33;--n:7"><div class="h"><span class="pic"></span>Pattern 3</div><svg><use href="#p3"/></svg></div>
<div class="c pc" style="--b:41;--n:7"><div class="h"><span class="pic"></span>Pattern 3</div><svg><use href="#p3"/></svg></div>
<div class="c pc" style="--b:49;--n:7"><div class="h"><span class="pic"></span>Pattern 3</div><svg><use href="#p3"/></svg></div>
<div class="c pc" style="--b:57;--n:7"><div class="h"><span class="pic"></span>Pattern 3</div><svg><use href="#p3"/></svg></div>
<div class="c pc" style="--b:65;--n:7"><div class="h"><span class="pic"></span>Pattern 3</div><svg><use href="#p3"/></svg></div>
<div class="c pc" style="--b:73;--n:7"><div class="h"><span class="pic"></span>Pattern 3</div><svg><use href="#p3"/></svg></div>
<div class="c pc" style="--b:81;--n:7"><div class="h"><span class="pic"></span>Pattern 3</div><svg><use href="#p3"/></svg></div>
<div class="c pc" style="--b:89;--n:7"><div class="h"><span class="pic"></span>Pattern 3</div><svg><use href="#p3"/></svg></div>
<div class="c pc" style="--b:97;--n:7"><div class="h"><span class="pic"></span>Pattern 3</div><svg><use href="#p3"/></svg></div>
<div class="c pc" style="--b:105;--n:7"><div class="h"><span class="pic"></span>Pattern 3</div><svg><use href="#p3"/></svg></div>
</div>
<div class="r" style="top:683px;height:32px">
<div class="c hd p" style="--b:1;--n:4;height:30px"><span class="ar">➤</span>PM..M</div><div class="c hd p" style="--b:5;--n:4;height:30px"><span class="ar">➤</span>P..M</div><div class="c hd p" style="--b:9;--n:4;height:30px"><span class="ar">➤</span>PM..M</div><div class="c hd p" style="--b:13;--n:4;height:30px"><span class="ar">➤</span>PM..M</div><div class="c hd p" style="--b:17;--n:4;height:30px"><span class="ar">➤</span>P..M</div><div class="c hd p" style="--b:21;--n:4;height:30px"><span class="ar">➤</span>PM..M</div><div class="c hd p" style="--b:25;--n:4;height:30px"><span class="ar">➤</span>PM..M</div><div class="c hd p" style="--b:29;--n:4;height:30px"><span class="ar">➤</span>P..M</div><div class="c hd p" style="--b:33;--n:4;height:30px"><span class="ar">➤</span>PM..M</div><div class="c hd p" style="--b:37;--n:4;height:30px"><span class="ar">➤</span>PM..M</div><div class="c hd p" style="--b:41;--n:4;height:30px"><span class="ar">➤</span>PM..M</div><div class="c hd p" style="--b:45;--n:4;height:30px"><span class="ar">➤</span>P..M</div><div class="c hd p" style="--b:49;--n:4;height:30px"><span class="ar">➤</span>PM..M</div><div class="c hd p" style="--b:53;--n:4;height:30px"><span class="ar">➤</span>PM..M</div><div class="c hd p" style="--b:57;--n:4;height:30px"><span class="ar">➤</span>P..M</div><div class="c hd p" style="--b:61;--n:4;height:30px"><span class="ar">➤</span>PM..M</div><div class="c hd p" style="--b:65;--n:4;height:30px"><span class="ar">➤</span>PM..M</div><div class="c hd p" style="--b:69;--n:4;height:30px"><span class="ar">➤</span>P..M</div><div class="c hd p" style="--b:73;--n:4;height:30px"><span class="ar">➤</span>PM..M</div><div class="c hd p" style="--b:77;--n:4;height:30px"><span class="ar">➤</span>P..</div><div class="c hd p" style="--b:81;--n:4;height:30px"><span class="ar">➤</span>P..M</div><div class="c hd p" style="--b:85;--n:4;height:30px"><span class="ar">➤</span>PM..M</div><div class="c hd p" style="--b:89;--n:4;height:30px"><span class="ar">➤</span>PM..M</div><div class="c hd p" style="--b:93;--n:4;height:30px"><span class="ar">➤</span>P..M</div><div class="c hd p" style="--b:97;--n:4;height:30px"><span class="ar">➤</span>PM..M</div><div class="c hd p" style="--b:101;--n:4;height:30px"><span class="ar">➤</span>PM..M</div><div class="c hd p" style="--b:105;--n:4;height:30px"><span class="ar">➤</span>PM..M</div><div class="c hd p" style="--b:109;--n:4;height:30px"><span class="ar">➤</span>PM..M</div>
</div>
<div class="r" style="top:715px;height:32px">
<div class="c hd p" style="--b:1;--n:4;height:30px"><span class="ar">➤</span>PM..M</div><div class="c hd p" style="--b:5;--n:4;height:30px"><span class="ar">➤</span>P..M</div><div class="c hd p" style="--b:9;--n:4;height:30px"><span class="ar">➤</span>PM..M</div><div class="c hd p" style="--b:13;--n:4;height:30px"><span class="ar">➤</span>PM..M</div><div class="c hd p" style="--b:17;--n:4;height:30px"><span class="ar">➤</span>P..M</div><div class="c hd p" style="--b:21;--n:4;height:30px"><span class="ar">➤</span>PM..M</div><div class="c hd p" style="--b:25;--n:4;height:30px"><span class="ar">➤</span>PM..M</div><div class="c hd p" style="--b:29;--n:4;height:30px"><span class="ar">➤</span>P..M</div><div class="c hd p" style="--b:33;--n:4;height:30px"><span class="ar">➤</span>PM..M</div><div class="c hd p" style="--b:37;--n:4;height:30px"><span class="ar">➤</span>PM..M</div><div class="c hd p" style="--b:41;--n:4;height:30px"><span class="ar">➤</span>PM..M</div><div class="c hd p" style="--b:45;--n:4;height:30px"><span class="ar">➤</span>P..M</div><div class="c hd p" style="--b:49;--n:4;height:30px"><span class="ar">➤</span>PM..M</div><div class="c hd p" style="--b:53;--n:4;height:30px"><span class="ar">➤</span>PM..M</div><div class="c hd p" style="--b:57;--n:4;height:30px"><span class="ar">➤</span>P..M</div><div class="c hd p" style="--b:61;--n:4;height:30px"><span class="ar">➤</span>PM..M</div><div class="c hd p" style="--b:65;--n:4;height:30px"><span class="ar">➤</span>PM..M</div><div class="c hd p" style="--b:69;--n:4;height:30px"><span class="ar">➤</span>P..M</div><div class="c hd p" style="--b:73;--n:4;height:30px"><span class="ar">➤</span>PM..M</div><div class="c hd p" style="--b:77;--n:4;height:30px"><span class="ar">➤</span>P..</div><div class="c hd p" style="--b:81;--n:4;height:30px"><span class="ar">➤</span>P..M</div><div class="c hd p" style="--b:85;--n:4;height:30px"><span class="ar">➤</span>PM..M</div><div class="c hd p" style="--b:89;--n:4;height:30px"><span class="ar">➤</span>PM..M</div><div class="c hd p" style="--b:93;--n:4;height:30px"><span class="ar">➤</span>P..M</div><div class="c hd p" style="--b:97;--n:4;height:30px"><span class="ar">➤</span>PM..M</div><div class="c hd p" style="--b:101;--n:4;height:30px"><span class="ar">➤</span>PM..M</div><div class="c hd p" style="--b:105;--n:4;height:30px"><span class="ar">➤</span>PM..M</div><div class="c hd p" style="--b:109;--n:4;height:30px"><span class="ar">➤</span>PM..M</div>
</div>
<div class="r" style="top:747px;height:72px">
<div class="c pc" style="--b:9;--n:7"><div class="h"><span class="pic"></span>Pattern 4</div><svg><use href="#p4"/></svg></div>
<div class="c pc" style="--b:17;--n:7"><div class="h"><span class="pic"></span>Pattern 4</div><svg><use href="#p4"/></svg></div>
<div class="c pc" style="--b:25;--n:7"><div class="h"><span class="pic"></span>Pattern 4</div><svg><use href="#p4"/></svg></div>
<div class="c pc" style="--b:33;--n:7"><div class="h"><span class="pic"></span>Pattern 4</div><svg><use href="#p4"/></svg></div>
<div class="c pc" style="--b:41;--n:7"><div class="h"><span class="pic"></span>Pattern 4</div><svg><use href="#p4"/></svg></div>
<div class="c pc" style="--b:49;--n:7"><div class="h"><span class="pic"></span>Pattern 4</div><svg><use href="#p4"/></svg></div>
<div class="c pc" style="--b:57;--n:7"><div class="h"><span class="pic"></span>Pattern 4</div><svg><use href="#p4"/></svg></div>
<div class="c pc" style="--b:65;--n:7"><div class="h"><span class="pic"></span>Pattern 4</div><svg><use href="#p4"/></svg></div>
<div class="c pc" style="--b:73;--n:7"><div class="h"><span class="pic"></span>Pattern 4</div><svg><use href="#p4"/></svg></div>
<div class="c pc" style="--b:81;--n:7"><div class="h"><span class="pic"></span>Pattern 4</div><svg><use href="#p4"/></svg></div>
<div class="c pc" style="--b:89;--n:7"><div class="h"><span class="pic"></span>Pattern 4</div><svg><use href="#p4"/></svg></div>
<div class="c pc" style="--b:97;--n:7"><div class="h"><span class="pic"></span>Pattern 4</div><svg><use href="#p4"/></svg></div>
<div class="c pc" style="--b:105;--n:7"><div class="h"><span class="pic"></span>Pattern 4</div><svg><use href="#p4"/></svg></div>
</div>
<div class="r" style="top:819px;height:72px">
<div class="c pc" style="--b:9"><div class="h"><span class="pic"></span>Pattern 5</div><svg><use href="#p5"/></svg></div>
<div class="c pc" style="--b:17"><div class="h"><span class="pic"></span>Pattern 5</div><svg><use href="#p5"/></svg></div>
<div class="c pc" style="--b:25"><div class="h"><span class="pic"></span>Pattern 5</div><svg><use href="#p5"/></svg></div>
<div class="c pc" style="--b:33"><div class="h"><span class="pic"></span>Pattern 5</div><svg><use href="#p5"/></svg></div>
<div class="c pc" style="--b:41"><div class="h"><span class="pic"></span>Pattern 5</div><svg><use href="#p5"/></svg></div>
<div class="c pc" style="--b:49"><div class="h"><span class="pic"></span>Pattern 5</div><svg><use href="#p5"/></svg></div>
<div class="c pc" style="--b:57"><div class="h"><span class="pic"></span>Pattern 5</div><svg><use href="#p5"/></svg></div>
<div class="c pc" style="--b:65"><div class="h"><span class="pic"></span>Pattern 5</div><svg><use href="#p5"/></svg></div>
<div class="c pc" style="--b:73"><div class="h"><span class="pic"></span>Pattern 5</div><svg><use href="#p5"/></svg></div>
<div class="c pc" style="--b:81"><div class="h"><span class="pic"></span>Pattern 5</div><svg><use href="#p5"/></svg></div>
<div class="c pc" style="--b:89"><div class="h"><span class="pic"></span>Pattern 5</div><svg><use href="#p5"/></svg></div>
<div class="c pc" style="--b:97"><div class="h"><span class="pic"></span>Pattern 5</div><svg><use href="#p5"/></svg></div>
<div class="c pc" style="--b:105"><div class="h"><span class="pic"></span>Pattern 5</div><svg><use href="#p5"/></svg></div>
</div>
<div class="r" style="top:891px;height:72px">
<div class="c pc" style="--b:9"><div class="h"><span class="pic"></span>Pattern 6</div><svg><use href="#p6"/></svg></div>
<div class="c pc" style="--b:17"><div class="h"><span class="pic"></span>Pattern 6</div><svg><use href="#p6"/></svg></div>
<div class="c pc" style="--b:33"><div class="h"><span class="pic"></span>Pattern 6</div><svg><use href="#p6"/></svg></div>
<div class="c pc" style="--b:41"><div class="h"><span class="pic"></span>Pattern 6</div><svg><use href="#p6"/></svg></div>
<div class="c pc" style="--b:49"><div class="h"><span class="pic"></span>Pattern 6</div><svg><use href="#p6"/></svg></div>
<div class="c pc" style="--b:57"><div class="h"><span class="pic"></span>Pattern 6</div><svg><use href="#p6"/></svg></div>
<div class="c pc" style="--b:65"><div class="h"><span class="pic"></span>Pattern 6</div><svg><use href="#p6"/></svg></div>
<div class="c pc" style="--b:81"><div class="h"><span class="pic"></span>Pattern 6</div><svg><use href="#p6"/></svg></div>
<div class="c pc" style="--b:89"><div class="h"><span class="pic"></span>Pattern 6</div><svg><use href="#p6"/></svg></div>
<div class="c pc" style="--b:97"><div class="h"><span class="pic"></span>Pattern 6</div><svg><use href="#p6"/></svg></div>
<div class="c pc" style="--b:105"><div class="h"><span class="pic"></span>Pattern 6</div><svg><use href="#p6"/></svg></div>
</div>
<div class="r" style="top:963px;height:72px">
<div class="c pc" style="--b:33"><div class="h"><span class="pic"></span>Pattern 7</div><svg><use href="#p7"/></svg></div>
<div class="c pc" style="--b:41"><div class="h"><span class="pic"></span>Pattern 7</div><svg><use href="#p7"/></svg></div>
<div class="c pc" style="--b:49"><div class="h"><span class="pic"></span>Pattern 7</div><svg><use href="#p7"/></svg></div>
<div class="c pc" style="--b:65"><div class="h"><span class="pic"></span>Pattern 7</div><svg><use href="#p7"/></svg></div>
<div class="c pc" style="--b:73"><div class="h"><span class="pic"></span>Pattern 7</div><svg><use href="#p7"/></svg></div>
<div class="c pc" style="--b:81"><div class="h"><span class="pic"></span>Pattern 7</div><svg><use href="#p7"/></svg></div>
<div class="c pc" style="--b:89"><div class="h"><span class="pic"></span>Pattern 7</div><svg><use href="#p7"/></svg></div>
<div class="c pc" style="--b:97"><div class="h"><span class="pic"></span>Pattern 7</div><svg><use href="#p7"/></svg></div>
<div class="c pc" style="--b:105"><div class="h"><span class="pic"></span>Pattern 7</div><svg><use href="#p7"/></svg></div>
</div>
<div class="r" style="top:1035px;height:72px">
<div class="c pc" style="--b:17"><div class="h"><span class="pic"></span>Pattern 2</div><svg><use href="#p2"/></svg></div>
<div class="c pc" style="--b:25"><div class="h"><span class="pic"></span>Pattern 2</div><svg><use href="#p2"/></svg></div>
<div class="c pc" style="--b:33"><div class="h"><span class="pic"></span>Pattern 2</div><svg><use href="#p2"/></svg></div>
<div class="c pc" style="--b:41"><div class="h"><span class="pic"></span>Pattern 2</div><svg><use href="#p2"/></svg></div>
<div class="c pc" style="--b:49"><div class="h"><span class="pic"></span>Pattern 2</div><svg><use href="#p2"/></svg></div>
<div class="c pc" style="--b:57"><div class="h"><span class="pic"></span>Pattern 2</div><svg><use href="#p2"/></svg></div>
<div class="c pc" style="--b:65"><div class="h"><span class="pic"></span>Pattern 2</div><svg><use href="#p2"/></svg></div>
<div class="c pc" style="--b:73"><div class="h"><span class="pic"></span>Pattern 2</div><svg><use href="#p2"/></svg></div>
<div class="c pc" style="--b:81"><div class="h"><span class="pic"></span>Pattern 2</div><svg><use href="#p2"/></svg></div>
<div class="c pc" style="--b:89"><div class="h"><span class="pic"></span>Pattern 2</div><svg><use href="#p2"/></svg></div>
<div class="c pc" style="--b:97"><div class="h"><span class="pic"></span>Pattern 2</div><svg><use href="#p2"/></svg></div>
<div class="c pc" style="--b:105"><div class="h"><span class="pic"></span>Pattern 2</div><svg><use href="#p2"/></svg></div>
</div>
<div class="r" style="top:1107px;height:72px">
<div class="c pc" style="--b:1;--n:7"><div class="h"><span class="pic"></span>Pattern 8</div><svg><use href="#p8"/></svg></div>
<div class="c pc" style="--b:17;--n:7"><div class="h"><span class="pic"></span>Pattern 8</div><svg><use href="#p8"/></svg></div>
<div class="c pc" style="--b:33;--n:7"><div class="h"><span class="pic"></span>Pattern 8</div><svg><use href="#p8"/></svg></div>
<div class="c pc" style="--b:49;--n:7"><div class="h"><span class="pic"></span>Pattern 8</div><svg><use href="#p8"/></svg></div>
<div class="c pc" style="--b:65;--n:7"><div class="h"><span class="pic"></span>Pattern 8</div><svg><use href="#p8"/></svg></div>
<div class="c pc" style="--b:81;--n:7"><div class="h"><span class="pic"></span>Pattern 8</div><svg><use href="#p8"/></svg></div>
<div class="c pc" style="--b:97;--n:7"><div class="h"><span class="pic"></span>Pattern 8</div><svg><use href="#p8"/></svg></div>
</div>
<div class="r" style="top:1179px;height:32px">
<div class="c hd p" style="--b:2;--n:1;height:30px;padding-left:2px"><span class="ar">➤</span></div>
<div class="c hd p" style="--b:18;--n:1;height:30px;padding-left:2px"><span class="ar">➤</span></div>
<div class="c hd p" style="--b:34;--n:1;height:30px;padding-left:2px"><span class="ar">➤</span></div>
<div class="c hd p" style="--b:50;--n:1;height:30px;padding-left:2px"><span class="ar">➤</span></div>
<div class="c hd p" style="--b:66;--n:1;height:30px;padding-left:2px"><span class="ar">➤</span></div>
<div class="c hd p" style="--b:82;--n:1;height:30px;padding-left:2px"><span class="ar">➤</span></div>
<div class="c hd p" style="--b:98;--n:1;height:30px;padding-left:2px"><span class="ar">➤</span></div>
</div>
<div class="r" style="top:1211px;height:32px">
<div class="c hd g" style="--b:1;height:30px"><span class="ar">➤</span>LT_Afro.._Cmin</div><div class="c hd g" style="--b:9;height:30px"><span class="ar">➤</span>LT_Afro.._Cmin</div><div class="c hd g" style="--b:17;height:30px"><span class="ar">➤</span>LT_Afro.._Cmin</div><div class="c hd g" style="--b:25;height:30px"><span class="ar">➤</span>LT_Afro.._Cmin</div><div class="c hd g" style="--b:33;height:30px"><span class="ar">➤</span>LT_Afro.._Cmin</div><div class="c hd g" style="--b:41;height:30px"><span class="ar">➤</span>LT_Afro.._Cmin</div><div class="c hd g" style="--b:49;height:30px"><span class="ar">➤</span>LT_Afro.._Cmin</div><div class="c hd g" style="--b:57;height:30px"><span class="ar">➤</span>LT_Afro.._Cmin</div><div class="c hd g" style="--b:65;height:30px"><span class="ar">➤</span>LT_Afro.._Cmin</div><div class="c hd g" style="--b:73;height:30px"><span class="ar">➤</span>LT_Afro.._Cmin</div><div class="c hd g" style="--b:81;height:30px"><span class="ar">➤</span>LT_Afro.._Cmin</div><div class="c hd g" style="--b:89;height:30px"><span class="ar">➤</span>LT_Afro.._Cmin</div><div class="c hd g" style="--b:97;height:30px"><span class="ar">➤</span>LT_Afro.._Cmin</div><div class="c hd g" style="--b:105;height:30px"><span class="ar">➤</span>LT_Afro.._Cmin</div>
</div>
<div class="r" style="top:1243px;height:72px">
<div class="c pc" style="--b:1"><div class="h"><span class="pic"></span>Pattern 9</div><svg><use href="#p9"/></svg></div>
<div class="c pc" style="--b:9"><div class="h"><span class="pic"></span>Pattern 9</div><svg><use href="#p9"/></svg></div>
<div class="c pc" style="--b:17"><div class="h"><span class="pic"></span>Pattern 9</div><svg><use href="#p9"/></svg></div>
<div class="c pc" style="--b:25"><div class="h"><span class="pic"></span>Pattern 9</div><svg><use href="#p9"/></svg></div>
<div class="c pc" style="--b:33"><div class="h"><span class="pic"></span>Pattern 9</div><svg><use href="#p9"/></svg></div>
<div class="c pc" style="--b:41"><div class="h"><span class="pic"></span>Pattern 9</div><svg><use href="#p9"/></svg></div>
<div class="c pc" style="--b:49"><div class="h"><span class="pic"></span>Pattern 9</div><svg><use href="#p9"/></svg></div>
<div class="c pc" style="--b:57"><div class="h"><span class="pic"></span>Pattern 9</div><svg><use href="#p9"/></svg></div>
<div class="c pc" style="--b:65"><div class="h"><span class="pic"></span>Pattern 9</div><svg><use href="#p9"/></svg></div>
<div class="c pc" style="--b:73"><div class="h"><span class="pic"></span>Pattern 9</div><svg><use href="#p9"/></svg></div>
<div class="c pc" style="--b:81"><div class="h"><span class="pic"></span>Pattern 9</div><svg><use href="#p9"/></svg></div>
<div class="c pc" style="--b:89"><div class="h"><span class="pic"></span>Pattern 9</div><svg><use href="#p9"/></svg></div>
<div class="c pc" style="--b:97"><div class="h"><span class="pic"></span>Pattern 9</div><svg><use href="#p9"/></svg></div>
<div class="c pc" style="--b:105"><div class="h"><span class="pic"></span>Pattern 9</div><svg><use href="#p9"/></svg></div>
</div>
<div class="r" style="top:1315px;height:72px">
<div class="c pc" style="--b:33;--n:16"><div class="h"><span class="pic"></span>Pattern 10</div><svg><use href="#p10"/></svg></div>
<div class="c pc" style="--b:81;--n:16"><div class="h"><span class="pic"></span>Pattern 10</div><svg><use href="#p10"/></svg></div>
</div>
<div class="r" style="top:1387px;height:32px">
<div class="sc rd" style="left:310px;width:79px"><span class="ar">➤</span>FL..in</div>
<div class="sc g" style="left:454px;width:58px"><span class="ar">➤</span>LT..</div>
<div class="sc g" style="left:599px;width:45px"><span class="ar">➤</span></div>
<div class="sc g" style="left:644px;width:76px"><span class="ar">➤</span>LT_..</div>
<div class="sc g" style="left:777px;width:58px"><span class="ar">➤</span>LT..</div>
<div class="sc pp" style="left:968px;width:118px"><span class="ar">➤</span>STCR..min</div>
<div class="sc rd" style="left:1156px;width:80px"><span class="ar">➤</span>FL..in</div>
<div class="sc g" style="left:1271px;width:73px"><span class="ar">➤</span>LT_..</div>
<div class="sc pp" style="left:1432px;width:126px"><span class="ar">➤</span>KM_.._021</div>
<div class="sc g" style="left:1567px;width:46px"><span class="ar">➤</span></div>
<div class="sc g" style="left:1614px;width:75px"><span class="ar">➤</span>LT_..</div>
<div class="sc g" style="left:1746px;width:57px"><span class="ar">➤</span>LT..</div>
<div class="sc g" style="left:1917px;width:63px"><span class="ar">➤</span>LT..</div>
<div class="sc g" style="left:1997px;width:109px"><span class="ar">➤</span>LT_Af..25</div>
</div>
<div class="r" style="top:1419px;height:33px">
<div class="sc pp" style="left:81px;width:209px"><span class="ar">➤</span>PMLxFejk.._120BPM</div>
<div class="sc g" style="left:434px;width:99px"><span class="ar">➤</span>LT_A..9</div>
<div class="sc gy" style="left:545px;width:99px"><span class="ar">➤</span>DS..min</div>
<div class="sc rd" style="left:644px;width:65px"><span class="ar">➤</span>G..9</div>
<div class="sc g" style="left:920px;width:58px"><span class="ar">➤</span>V..</div>
<div class="sc gy" style="left:1190px;width:99px"><span class="ar">➤</span>DS..min</div>
<div class="sc pp" style="left:1291px;width:100px"><span class="ar">➤</span>KM..020</div>
<div class="sc g" style="left:1402px;width:99px"><span class="ar">➤</span>LT_A..9</div>
<div class="sc gy" style="left:1513px;width:100px"><span class="ar">➤</span>DS..min</div>
<div class="sc rd" style="left:1614px;width:64px"><span class="ar">➤</span>G..9</div>
</div>
</body></html>
